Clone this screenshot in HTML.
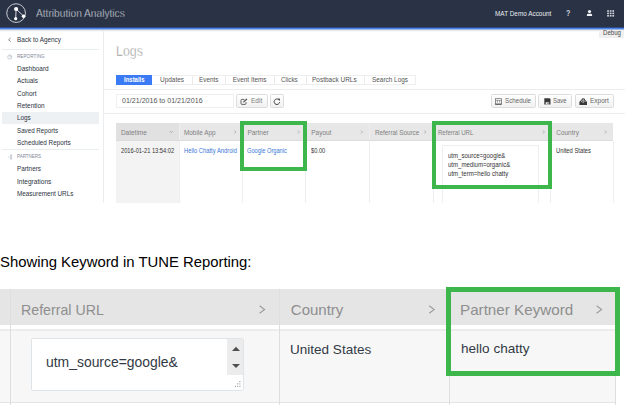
<!DOCTYPE html>
<html><head><meta charset="utf-8"><style>
html,body{margin:0;padding:0;}
body{width:625px;height:405px;overflow:hidden;position:relative;background:#fff;font-family:"Liberation Sans",sans-serif;}
.a{position:absolute;box-sizing:border-box;}
.btn{border:1px solid #dcdcdc;border-radius:1.5px;background:linear-gradient(#fff,#f1f1f1);}
.t{position:absolute;white-space:nowrap;line-height:1em;transform-origin:0 0;font-family:"Liberation Sans",sans-serif;}
</style></head><body>
<!-- ======= app screenshot (clipped) ======= -->
<div class="a" style="left:0;top:0;width:625px;height:202.6px;overflow:hidden;">
  <!-- header -->
  <div class="a" style="left:0;top:0;width:623.6px;height:27px;background:#2a3346;"></div>
  <div class="a" style="left:0;top:27px;width:623.6px;height:1px;background:#2d4a84;"></div>
  <div class="a" style="left:0;top:28px;width:623.6px;height:1px;background:#4784ee;"></div>
  <div class="a" style="left:0;top:29px;width:623.6px;height:0.6px;background:#9fb6e4;"></div>
  <div class="a" style="left:0;top:29.6px;width:623.6px;height:2px;background:linear-gradient(#e2e3e6,#fff);"></div>
  <svg class="a" style="left:0;top:0" width="32" height="27" viewBox="0 0 32 27">
    <circle cx="16.1" cy="13.1" r="9.35" fill="none" stroke="#cfd3d9" stroke-width="0.95"/>
    <line x1="16.1" y1="9" x2="15.7" y2="18.7" stroke="#e6e8ec" stroke-width="0.9"/>
    <line x1="16.1" y1="9" x2="23.6" y2="16.1" stroke="#e6e8ec" stroke-width="0.9"/>
    <circle cx="16.1" cy="9" r="2.1" fill="#fff"/>
    <circle cx="15.7" cy="18.7" r="1.6" fill="#fff"/>
    <circle cx="23.6" cy="16.2" r="1.8" fill="#fff"/>
  </svg>
  <!-- person icon -->
  <svg class="a" style="left:586px;top:9px" width="7" height="8" viewBox="0 0 7 8">
    <circle cx="3.5" cy="2.5" r="1.6" fill="#f2f3f6"/>
    <path d="M0.9 7 L0.9 6 Q0.9 4.8 2.2 4.8 L4.8 4.8 Q6.1 4.8 6.1 6 L6.1 7 Z" fill="#f2f3f6"/>
  </svg>
  <!-- grid icon -->
  <svg class="a" style="left:607px;top:9.7px" width="8" height="7" viewBox="0 0 8 7">
    <g fill="#d5d8de">
      <rect x="0.2" y="0.2" width="1.7" height="1.6"/><rect x="2.8" y="0.2" width="1.7" height="1.6"/><rect x="5.4" y="0.2" width="1.7" height="1.6"/>
      <rect x="0.2" y="2.6" width="1.7" height="1.6"/><rect x="2.8" y="2.6" width="1.7" height="1.6"/><rect x="5.4" y="2.6" width="1.7" height="1.6"/>
      <rect x="0.2" y="5" width="1.7" height="1.6"/><rect x="2.8" y="5" width="1.7" height="1.6"/><rect x="5.4" y="5" width="1.7" height="1.6"/>
    </g>
  </svg>

  <!-- sidebar -->
  <div class="a" style="left:103.1px;top:31px;width:1px;height:175px;background:#eaecef;"></div>
  <div class="a" style="left:2px;top:49px;width:97px;height:1px;background:#e8eef0;"></div>
  <div class="a" style="left:2px;top:149px;width:97px;height:1px;background:#e8eef0;"></div>
  <div class="a" style="left:2.2px;top:111.8px;width:96.8px;height:12px;background:#eef1f3;"></div>
  <svg class="a" style="left:7px;top:37px" width="6" height="6" viewBox="0 0 6 6">
    <polyline points="3.7,1.0 1.6,2.8 3.7,4.6" fill="none" stroke="#5f6878" stroke-width="0.75"/>
  </svg>
  <svg class="a" style="left:6.5px;top:53.5px" width="6" height="6" viewBox="0 0 6 6">
    <circle cx="2.8" cy="3" r="2.1" fill="none" stroke="#b5bcc6" stroke-width="0.7"/>
    <path d="M2.8 3 L2.8 0.9 M2.8 3 L4.9 3" stroke="#b5bcc6" stroke-width="0.6"/>
  </svg>
  <svg class="a" style="left:6.5px;top:153.8px" width="7" height="6" viewBox="0 0 7 6">
    <path d="M0.8 3 L1.8 3 M3.4 1 L4.6 0.6 L4.6 5.4 L3.4 5 Z" fill="none" stroke="#b5bcc6" stroke-width="0.7"/>
  </svg>

  <!-- debug label -->
  <div class="a" style="left:599px;top:29.9px;width:24.6px;height:8.1px;background:#efefef;"></div>

  <!-- tabs -->
  <div class="a" style="left:116px;top:74.5px;width:299.5px;height:10.6px;border:1px solid #eeeeee;background:#fff;"></div>
  <div class="a" style="left:116.1px;top:74.6px;width:35.8px;height:10.5px;background:#3a7bf5;"></div>
  <div class="a" style="left:191.7px;top:74.5px;width:1px;height:10.6px;background:#ececec;"></div>
  <div class="a" style="left:225.3px;top:74.5px;width:1px;height:10.6px;background:#ececec;"></div>
  <div class="a" style="left:273.7px;top:74.5px;width:1px;height:10.6px;background:#ececec;"></div>
  <div class="a" style="left:305.5px;top:74.5px;width:1px;height:10.6px;background:#ececec;"></div>
  <div class="a" style="left:364px;top:74.5px;width:1px;height:10.6px;background:#ececec;"></div>
  <div class="a" style="left:103.6px;top:88.6px;width:522px;height:1px;background:#ececec;"></div>

  <!-- toolbar -->
  <div class="a" style="left:116px;top:94.3px;width:118.4px;height:13.7px;border:1px solid #efefef;background:#fff;"></div>
  <div class="a btn" style="left:236.4px;top:94.4px;width:31.2px;height:13.6px;"></div>
  <div class="a btn" style="left:270px;top:94.4px;width:14.4px;height:13.6px;"></div>
  <div class="a btn" style="left:490.6px;top:94.3px;width:45px;height:13.9px;"></div>
  <div class="a btn" style="left:538.3px;top:94.3px;width:34.1px;height:13.9px;"></div>
  <div class="a btn" style="left:574.6px;top:94.3px;width:39.4px;height:13.9px;"></div>
  <!-- edit icon -->
  <svg class="a" style="left:240.4px;top:97.6px" width="9" height="8" viewBox="0 0 9 8">
    <path d="M4.4 1.4 H2 Q1 1.4 1 2.4 V5.4 Q1 6.4 2 6.4 H5 Q6 6.4 6 5.4 V4.2" fill="none" stroke="#5a5a5a" stroke-width="0.95"/>
    <path d="M2.9 4.6 L3.2 3.4 L6.4 0.5 L7.4 1.4 L4.2 4.3 Z" fill="#5a5a5a"/>
  </svg>
  <!-- refresh icon -->
  <svg class="a" style="left:272.8px;top:97.8px" width="9" height="8" viewBox="0 0 9 8">
    <path d="M6.6 4.2 A2.75 2.75 0 1 1 5.6 1.6" fill="none" stroke="#3a3a3a" stroke-width="0.95"/>
    <path d="M4.6 0.5 L7.1 0.7 L6.6 3.1 Z" fill="#3a3a3a"/>
  </svg>
  <!-- schedule icon -->
  <svg class="a" style="left:495px;top:98.4px" width="7" height="7" viewBox="0 0 7 7">
    <rect x="0.5" y="0.7" width="6" height="5.6" fill="#fafafa" stroke="#707070" stroke-width="0.8"/>
    <path d="M0.5 6.1 H6.5" stroke="#404040" stroke-width="0.9"/>
    <path d="M2.4 2 V4.6 M4.6 2 V4.6 M1 2.6 H6" stroke="#777" stroke-width="0.6"/>
  </svg>
  <!-- save icon -->
  <svg class="a" style="left:543.6px;top:97.9px" width="7" height="7" viewBox="0 0 7 7">
    <path d="M0.3 0.2 H5.6 L6.5 1.1 V6.5 H0.3 Z" fill="#383838"/>
    <rect x="1.7" y="4.2" width="3.4" height="2.3" fill="#e8e8e8"/>
    <rect x="3.6" y="4.7" width="0.9" height="1.3" fill="#383838"/>
  </svg>
  <!-- export icon -->
  <svg class="a" style="left:578.6px;top:97.6px" width="9" height="8" viewBox="0 0 9 8">
    <path d="M0.4 4 L1.5 2.6 H2.4 L1.9 4 H3.1 Q4.2 5.3 5.3 4 H6.5 L6 2.6 H6.9 L8 4 V6.9 H0.4 Z" fill="#383838"/>
    <circle cx="4.2" cy="2.3" r="2" fill="#383838"/>
    <path d="M4.2 0.9 V3.3 M3.2 2.4 L4.2 3.4 L5.2 2.4" fill="none" stroke="#f2f2f2" stroke-width="0.7"/>
  </svg>
  <div class="a" style="left:103.6px;top:112.6px;width:522px;height:1px;background:#ececec;"></div>

  <!-- table -->
  <div class="a" style="left:116px;top:123.3px;width:497px;height:17.2px;background:#e7e7e7;"></div>
  <div class="a" style="left:116px;top:123.3px;width:62.7px;height:17.2px;background:#e1e1e1;"></div>
  <div class="a" style="left:116px;top:140.5px;width:62.7px;height:63px;background:#f3f3f3;"></div>
  <div class="a" style="left:178.7px;top:123.3px;width:1px;height:80px;background:#eeeeee;"></div>
  <div class="a" style="left:242.2px;top:123.3px;width:1px;height:80px;background:#eeeeee;"></div>
  <div class="a" style="left:305.4px;top:123.3px;width:1px;height:80px;background:#eeeeee;"></div>
  <div class="a" style="left:369.2px;top:123.3px;width:1px;height:80px;background:#eeeeee;"></div>
  <div class="a" style="left:433px;top:123.3px;width:1px;height:80px;background:#eeeeee;"></div>
  <div class="a" style="left:550.4px;top:123.3px;width:1px;height:80px;background:#eeeeee;"></div>
  <div class="a" style="left:612.5px;top:140.5px;width:1px;height:63px;background:#eeeeee;"></div>
  <div class="a" style="left:116px;top:140.2px;width:497px;height:0.6px;background:#dcdcdc;"></div>
  <!-- header chevrons -->
  <svg class="a" style="left:0;top:0" width="625" height="203" viewBox="0 0 625 203">
    <g fill="none" stroke="#9a9a9a" stroke-width="0.7">
      <polyline points="169.8,131 171.3,132.5 172.8,131"/>
      <polyline points="234.3,130.4 235.8,131.9 234.3,133.4"/>
      <polyline points="297.9,130.4 299.4,131.9 297.9,133.4"/>
      <polyline points="361,130.4 362.5,131.9 361,133.4"/>
      <polyline points="424.3,130.4 425.8,131.9 424.3,133.4"/>
      <polyline points="542.9,130.4 544.4,131.9 542.9,133.4"/>
      <polyline points="604.8,130.4 606.3,131.9 604.8,133.4"/>
    </g>
  </svg>
  <!-- textarea -->
  <div class="a" style="left:441.8px;top:144.6px;width:97.7px;height:70px;border:1px solid #efefef;background:#fff;"></div>
  <!-- green boxes -->
  <div class="a" style="left:240.1px;top:120.6px;width:67.3px;height:50.7px;border:4.3px solid #3db64b;"></div>
  <div class="a" style="left:431.8px;top:120.9px;width:120.5px;height:67.8px;border:4.3px solid #3db64b;"></div>
</div>

<!-- ======= bottom table ======= -->
<div class="a" style="left:0;top:288.8px;width:616px;height:36px;background:#e5e5e5;"></div>
<div class="a" style="left:0;top:328.9px;width:616px;height:2px;background:#ececec;"></div>
<div class="a" style="left:0;top:331px;width:616px;height:71px;background:#f7f7f7;"></div>
<div class="a" style="left:0;top:401.6px;width:616px;height:1px;background:#e3e3e3;"></div>
<div class="a" style="left:9.8px;top:288.8px;width:1.2px;height:117px;background:#dedede;"></div>
<div class="a" style="left:279.2px;top:288.8px;width:1.2px;height:117px;background:#dedede;"></div>
<div class="a" style="left:448.9px;top:288.8px;width:1.2px;height:117px;background:#dedede;"></div>
<div class="a" style="left:615.2px;top:288.8px;width:1.2px;height:117px;background:#dedede;"></div>
<svg class="a" style="left:0;top:280px" width="625" height="125" viewBox="0 280 625 125">
  <g fill="none" stroke="#9c9c9c" stroke-width="1.1">
    <polyline points="259.6,305.8 264.6,309.5 259.6,313.2"/>
    <polyline points="429.2,305.8 434.2,309.5 429.2,313.2"/>
    <polyline points="596.6,305.8 601.6,309.5 596.6,313.2"/>
  </g>
</svg>
<!-- textarea bottom -->
<div class="a" style="left:31.4px;top:338px;width:212.6px;height:53px;border:1px solid #dfe4e8;border-radius:1.5px;background:#fff;"></div>
<div class="a" style="left:227.2px;top:338.8px;width:15.8px;height:36px;background:#ececec;"></div>
<svg class="a" style="left:226px;top:338px" width="18" height="53" viewBox="0 0 18 53">
  <path d="M6 13 L10 8.8 L14 13 Z" fill="#505050"/>
  <path d="M6 25.9 L10 30.1 L14 25.9 Z" fill="#505050"/>
  <g fill="#8a8a8a">
    <rect x="13.4" y="43" width="1" height="1"/>
    <rect x="11.2" y="45.4" width="1" height="1"/><rect x="13.4" y="45.4" width="1" height="1"/>
    <rect x="9" y="47.8" width="1" height="1"/><rect x="11.2" y="47.8" width="1" height="1"/><rect x="13.4" y="47.8" width="1" height="1"/>
  </g>
</svg>
<div class="a" style="left:446.2px;top:286.5px;width:173.8px;height:89.2px;border:5.6px solid #3db64b;"></div>

<div class="t" style="left:35.50px;top:7.69px;font-size:11.0px;color:#d4d8de;font-weight:400;transform:scaleX(0.9248);-webkit-text-stroke:0.28px #2a3346;">Attribution Analytics</div>
<div class="t" style="left:495.30px;top:9.71px;font-size:7.2px;color:#e9ebf0;font-weight:400;transform:scaleX(0.8906);">MAT Demo Account</div>
<div class="t" style="left:565.90px;top:8.72px;font-size:8.6px;color:#c9cdd4;font-weight:700;transform:scaleX(0.8400);">?</div>
<div class="t" style="left:16.90px;top:35.67px;font-size:7.0px;color:#2c3342;font-weight:400;transform:scaleX(0.9117);">Back to Agency</div>
<div class="t" style="left:16.90px;top:53.67px;font-size:5.0px;color:#7f8897;font-weight:400;transform:scaleX(0.9346);">REPORTING</div>
<div class="t" style="left:16.90px;top:64.97px;font-size:7.0px;color:#2c3342;font-weight:400;transform:scaleX(0.9257);">Dashboard</div>
<div class="t" style="left:16.90px;top:77.27px;font-size:7.0px;color:#2c3342;font-weight:400;transform:scaleX(0.9081);">Actuals</div>
<div class="t" style="left:16.90px;top:89.57px;font-size:7.0px;color:#2c3342;font-weight:400;transform:scaleX(0.9257);">Cohort</div>
<div class="t" style="left:16.90px;top:101.87px;font-size:7.0px;color:#2c3342;font-weight:400;transform:scaleX(0.9244);">Retention</div>
<div class="t" style="left:16.90px;top:114.17px;font-size:7.0px;color:#2c3342;font-weight:400;transform:scaleX(0.9057);">Logs</div>
<div class="t" style="left:16.90px;top:126.67px;font-size:7.0px;color:#2c3342;font-weight:400;transform:scaleX(0.8888);">Saved Reports</div>
<div class="t" style="left:16.90px;top:138.87px;font-size:7.0px;color:#2c3342;font-weight:400;transform:scaleX(0.9028);">Scheduled Reports</div>
<div class="t" style="left:16.90px;top:154.37px;font-size:5.0px;color:#7f8897;font-weight:400;transform:scaleX(0.9005);">PARTNERS</div>
<div class="t" style="left:16.90px;top:165.27px;font-size:7.0px;color:#2c3342;font-weight:400;transform:scaleX(0.9052);">Partners</div>
<div class="t" style="left:16.90px;top:177.67px;font-size:7.0px;color:#2c3342;font-weight:400;transform:scaleX(0.9385);">Integrations</div>
<div class="t" style="left:16.90px;top:189.97px;font-size:7.0px;color:#2c3342;font-weight:400;transform:scaleX(0.9053);">Measurement URLs</div>
<div class="t" style="left:602.90px;top:30.47px;font-size:6.3px;color:#4a4a4a;font-weight:400;transform:scaleX(0.9657);">Debug</div>
<div class="t" style="left:116.23px;top:43.90px;font-size:14.3px;color:#8a8a8a;font-weight:300;transform:scaleX(0.8676);-webkit-text-stroke:0.45px #fff;">Logs</div>
<div class="t" style="left:121.90px;top:98.14px;font-size:6.8px;color:#565656;font-weight:400;transform:scaleX(1.0399);">01/21/2016 to 01/21/2016</div>
<div class="t" style="left:250.90px;top:98.24px;font-size:6.8px;color:#7a7a7a;font-weight:400;transform:scaleX(0.9557);">Edit</div>
<div class="t" style="left:504.70px;top:98.04px;font-size:6.8px;color:#666;font-weight:400;transform:scaleX(0.9173);">Schedule</div>
<div class="t" style="left:553.00px;top:98.04px;font-size:6.8px;color:#666;font-weight:400;transform:scaleX(0.8847);">Save</div>
<div class="t" style="left:590.00px;top:98.04px;font-size:6.8px;color:#666;font-weight:400;transform:scaleX(0.9567);">Export</div>
<div class="t" style="left:120.90px;top:129.60px;font-size:6.5px;color:#808080;font-weight:400;">Datetime</div>
<div class="t" style="left:184.00px;top:129.60px;font-size:6.5px;color:#808080;font-weight:400;transform:scaleX(0.9816);">Mobile App</div>
<div class="t" style="left:247.40px;top:129.60px;font-size:6.5px;color:#808080;font-weight:400;">Partner</div>
<div class="t" style="left:311.20px;top:129.60px;font-size:6.5px;color:#808080;font-weight:400;">Payout</div>
<div class="t" style="left:374.50px;top:129.60px;font-size:6.5px;color:#808080;font-weight:400;transform:scaleX(0.9716);">Referral Source</div>
<div class="t" style="left:438.10px;top:129.60px;font-size:6.5px;color:#808080;font-weight:400;transform:scaleX(0.9292);">Referral URL</div>
<div class="t" style="left:556.20px;top:129.60px;font-size:6.5px;color:#808080;font-weight:400;">Country</div>
<div class="t" style="left:120.90px;top:147.81px;font-size:6.6px;color:#333;font-weight:400;transform:scaleX(0.8691);">2016-01-21 13:54:02</div>
<div class="t" style="left:184.00px;top:147.81px;font-size:6.6px;color:#3b78d8;font-weight:400;transform:scaleX(0.8798);">Hello Chatty Android</div>
<div class="t" style="left:247.40px;top:147.81px;font-size:6.6px;color:#3b78d8;font-weight:400;transform:scaleX(0.8638);">Google Organic</div>
<div class="t" style="left:311.20px;top:147.81px;font-size:6.6px;color:#333;font-weight:400;transform:scaleX(0.8614);">$0.00</div>
<div class="t" style="left:556.20px;top:147.81px;font-size:6.6px;color:#333;font-weight:400;transform:scaleX(0.8812);">United States</div>
<div class="t" style="left:448.30px;top:152.78px;font-size:6.4px;color:#333;font-weight:400;transform:scaleX(0.9460);">utm_source=google&</div>
<div class="t" style="left:448.30px;top:161.68px;font-size:6.4px;color:#333;font-weight:400;transform:scaleX(0.9455);">utm_medium=organic&</div>
<div class="t" style="left:448.30px;top:170.68px;font-size:6.4px;color:#333;font-weight:400;transform:scaleX(0.9553);">utm_term=hello chatty</div>
<div class="t" style="left:0.20px;top:254.10px;font-size:15.0px;color:#000;font-weight:400;transform:scaleX(0.9901);">Showing Keyword in TUNE Reporting:</div>
<div class="t" style="left:21.45px;top:301.50px;font-size:15.0px;color:#8e8e8e;font-weight:400;transform:scaleX(0.9457);">Referral URL</div>
<div class="t" style="left:290.80px;top:301.50px;font-size:15.0px;color:#8e8e8e;font-weight:400;">Country</div>
<div class="t" style="left:460.19px;top:301.50px;font-size:15.0px;color:#8e8e8e;font-weight:400;transform:scaleX(1.0129);">Partner Keyword</div>
<div class="t" style="left:45.80px;top:355.03px;font-size:14.5px;color:#333a45;font-weight:400;transform:scaleX(0.9596);">utm_source=google&</div>
<div class="t" style="left:289.77px;top:342.73px;font-size:13.2px;color:#333a45;font-weight:400;transform:scaleX(1.0258);">United States</div>
<div class="t" style="left:461.20px;top:342.23px;font-size:13.2px;color:#333a45;font-weight:400;transform:scaleX(1.0281);">hello chatty</div>
<div class="t" style="left:123.60px;top:77.18px;font-size:6.4px;color:#ffffff;font-weight:700;transform:scaleX(0.9347);">Installs</div>
<div class="t" style="left:159.90px;top:77.18px;font-size:6.4px;color:#555;font-weight:400;transform:scaleX(1.0124);">Updates</div>
<div class="t" style="left:198.60px;top:77.18px;font-size:6.4px;color:#555;font-weight:400;transform:scaleX(0.9927);">Events</div>
<div class="t" style="left:232.80px;top:77.18px;font-size:6.4px;color:#555;font-weight:400;">Event Items</div>
<div class="t" style="left:281.20px;top:77.18px;font-size:6.4px;color:#555;font-weight:400;transform:scaleX(0.9795);">Clicks</div>
<div class="t" style="left:312.20px;top:77.18px;font-size:6.4px;color:#555;font-weight:400;transform:scaleX(1.0149);">Postback URLs</div>
<div class="t" style="left:371.50px;top:77.18px;font-size:6.4px;color:#555;font-weight:400;transform:scaleX(1.0032);">Search Logs</div>
</body></html>
